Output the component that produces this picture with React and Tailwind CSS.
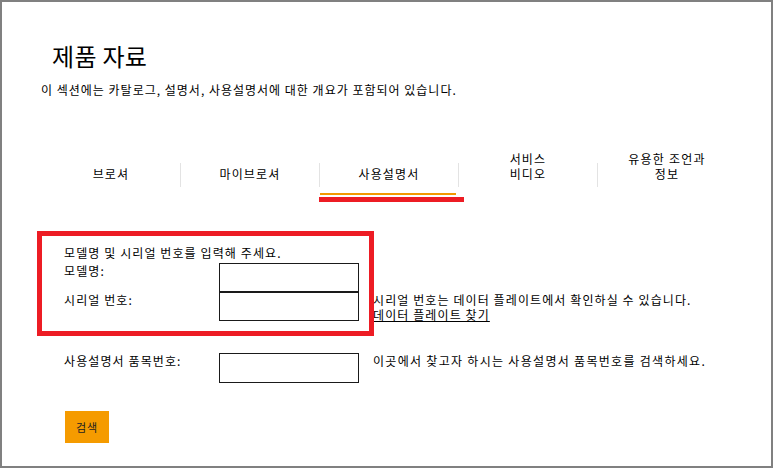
const tabs = [
    { label: '브로셔' },
    { label: '마이브로셔' },
    { label: '사용설명서', active: true },
    { label: '서비스\n비디오' },
    { label: '유용한 조언과\n정보' },
];

const Field = ({ className = '' }) => (
    <input type="text" className={`w-[140px] border border-[#1a1a1a] bg-white outline-none ${className}`} />
);

const App = () => {
    return (
        <div className="relative w-[773px] h-[468px] overflow-hidden border-2 border-[#808080] bg-white text-black font-['Noto_Sans_CJK_KR','Noto_Sans',sans-serif]">
            <h1 className="ml-[50px] mt-[38px] text-[24px] leading-[32px] font-normal tracking-[0.3px]">제품 자료</h1>
            <p className="ml-[39px] mt-[10px] text-[12px] leading-[16px] tracking-[1px]">
                이 섹션에는 카탈로그, 설명서, 사용설명서에 대한 개요가 포함되어 있습니다.
            </p>

            {/* tabs */}
            <nav className="ml-[40px] mt-[53px] flex items-end text-[12px] leading-[15px] tracking-[1.2px]">
                {tabs.map((tab, i) => (
                    <div key={tab.label} className="flex items-end">
                        {i > 0 && <div className="w-px h-[24px] bg-[#e3e3e3]" />}
                        <div className="relative w-[138px] pb-[6px] text-center whitespace-pre-line">
                            {tab.label}
                            {tab.active && <span className="absolute left-0 right-[2px] bottom-[-8px] h-[2px] bg-[#f39800]" />}
                        </div>
                    </div>
                ))}
            </nav>

            {/* model / serial */}
            <div className="ml-[62px] mt-[58px] text-[12px] leading-[15px] tracking-[1.1px]">
                <p>모델명 및 시리얼 번호를 입력해 주세요.</p>
                <div className="mt-[3px] flex items-start">
                    <label className="w-[155px]">모델명:</label>
                    <Field className="h-[29px]" />
                </div>
                <div className="flex items-start">
                    <label className="w-[155px]">시리얼 번호:</label>
                    <Field className="h-[29px]" />
                    <div className="ml-[14px]">
                        <p>시리얼 번호는 데이터 플레이트에서 확인하실 수 있습니다.</p>
                        <a href="#" className="underline">데이터 플레이트 찾기</a>
                    </div>
                </div>

                <div className="mt-[31px] flex items-start">
                    <label className="w-[155px]">사용설명서 품목번호:</label>
                    <Field className="h-[30px]" />
                    <p className="ml-[14px] tracking-[1.3px]">이곳에서 찾고자 하시는 사용설명서 품목번호를 검색하세요.</p>
                </div>

                <button className="ml-px mt-[28px] w-[44px] h-[32px] bg-[#f59b00] text-[11px] text-[#222] tracking-[1px]">검색</button>
            </div>

            {/* annotation marks */}
            <div className="absolute left-[35px] top-[229px] w-[337px] h-[105px] border-[5px] border-[#ed1c24]" />
            <div className="absolute left-[317px] top-[195px] w-[145px] h-[5px] bg-[#ed1c24]" />
        </div>
    );
};

export default App;
